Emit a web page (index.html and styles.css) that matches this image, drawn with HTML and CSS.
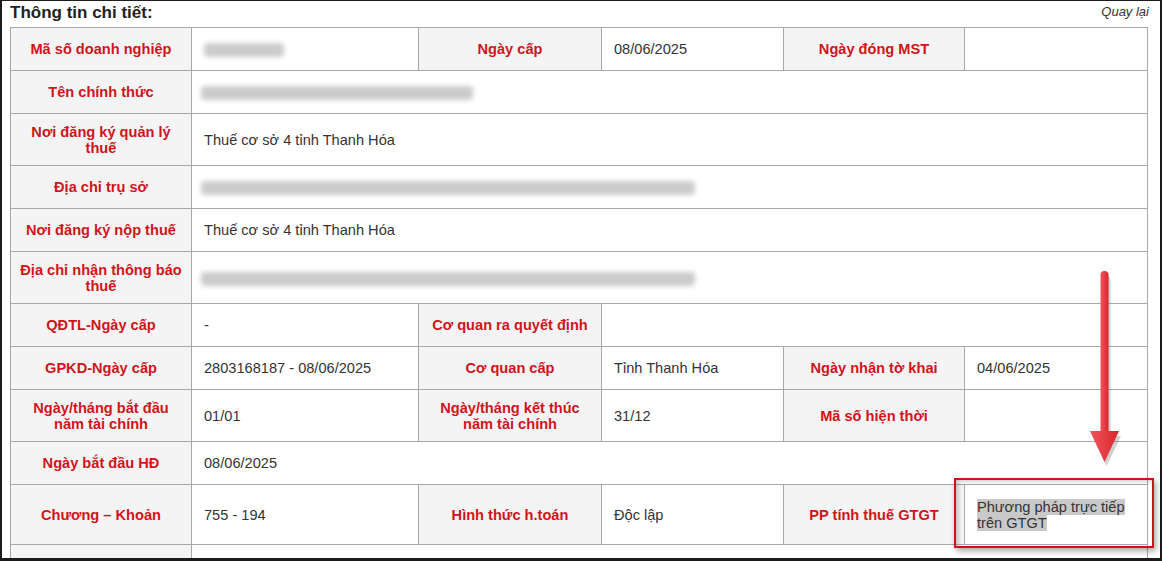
FILE: index.html
```html
<!DOCTYPE html>
<html lang="vi">
<head>
    <meta charset="UTF-8">
    <title>Thông tin chi tiết</title>
    <link rel="stylesheet" href="styles.css">
</head>
<body>
    <div class="trang">
        <div class="dau">
            <h2 class="tieu-de">Thông tin chi tiết:</h2>
            <a class="quay-lai" href="#">Quay lại</a>
        </div>
        <table class="bang">
            <colgroup>
                <col style="width:181px"><col style="width:227px"><col style="width:183px">
                <col style="width:182px"><col style="width:181px"><col style="width:183px">
            </colgroup>
            <tr class="h43">
                <th>Mã số doanh nghiệp</th>
                <td><span class="mo" style="width:80px"></span></td>
                <th>Ngày cấp</th>
                <td>08/06/2025</td>
                <th>Ngày đóng MST</th>
                <td></td>
            </tr>
            <tr class="h43">
                <th>Tên chính thức</th>
                <td colspan="5"><span class="mo mo-trai" style="width:272px"></span></td>
            </tr>
            <tr class="h52">
                <th>Nơi đăng ký quản lý thuế</th>
                <td colspan="5">Thuế cơ sở 4 tỉnh Thanh Hóa</td>
            </tr>
            <tr class="h43">
                <th>Địa chỉ trụ sở</th>
                <td colspan="5"><span class="mo mo-trai" style="width:494px"></span></td>
            </tr>
            <tr class="h43">
                <th>Nơi đăng ký nộp thuế</th>
                <td colspan="5">Thuế cơ sở 4 tỉnh Thanh Hóa</td>
            </tr>
            <tr class="h52">
                <th>Địa chỉ nhận thông báo thuế</th>
                <td colspan="5"><span class="mo mo-trai" style="width:494px"></span></td>
            </tr>
            <tr class="h43">
                <th>QĐTL-Ngày cấp</th>
                <td>-</td>
                <th>Cơ quan ra quyết định</th>
                <td colspan="3"></td>
            </tr>
            <tr class="h43">
                <th>GPKD-Ngày cấp</th>
                <td>2803168187 - 08/06/2025</td>
                <th>Cơ quan cấp</th>
                <td>Tỉnh Thanh Hóa</td>
                <th>Ngày nhận tờ khai</th>
                <td>04/06/2025</td>
            </tr>
            <tr class="h52">
                <th>Ngày/tháng bắt đầu năm tài chính</th>
                <td>01/01</td>
                <th>Ngày/tháng kết thúc năm tài chính</th>
                <td>31/12</td>
                <th>Mã số hiện thời</th>
                <td></td>
            </tr>
            <tr class="h43">
                <th>Ngày bắt đầu HĐ</th>
                <td colspan="5">08/06/2025</td>
            </tr>
            <tr class="h60">
                <th>Chương – Khoản</th>
                <td>755 - 194</td>
                <th>Hình thức h.toán</th>
                <td>Độc lập</td>
                <th>PP tính thuế GTGT</th>
                <td class="o-chon"><span class="boi-den">Phương pháp trực tiếp</span><br><span class="boi-den">trên GTGT</span></td>
            </tr>
            <tr class="h43">
                <th></th>
                <td colspan="5"></td>
            </tr>
        </table>

        <!-- chú thích: mũi tên và khung đỏ -->
        <svg class="mui-ten" width="40" height="200" viewBox="0 0 40 200">
            <defs>
                <linearGradient id="do" x1="0" x2="1">
                    <stop offset="0" stop-color="#f0555a"/>
                    <stop offset="1" stop-color="#d8262c"/>
                </linearGradient>
            </defs>
            <g opacity="0.35" transform="translate(2,3)">
                <rect x="15.5" y="3" width="8" height="165" rx="4" fill="#777"/>
                <polygon points="5,163 34,163 19.5,193" fill="#777"/>
            </g>
            <rect x="15.5" y="1" width="8" height="165" rx="4" fill="url(#do)"/>
            <polygon points="5,161 34,161 19.5,192" fill="url(#do)"/>
        </svg>
        <div class="khung-do"></div>
    </div>
</body>
</html>
```

FILE: styles.css
```css
body {
    margin: 0;
    background: #ffffff;
    font-family: "Liberation Sans", Arial, sans-serif;
}
.trang {
    position: relative;
    box-sizing: border-box;
    width: 1162px;
    height: 561px;
    border: 2px solid #1c1c1c;
    border-top-width: 1px;
    border-bottom-width: 3px;
    overflow: hidden;
    background: #ffffff;
}
.dau {
    display: flex;
    justify-content: space-between;
    align-items: flex-start;
    height: 26px;
    padding: 0 11px 0 8px;
}
.tieu-de {
    margin: 0;
    font-size: 17px;
    line-height: 23px;
    font-weight: bold;
    color: #222;
}
.quay-lai {
    margin-top: 3px;
    font-size: 13px;
    font-style: italic;
    color: #333;
    text-decoration: none;
}
.bang {
    margin-left: 8px;
    width: 1137px;
    table-layout: fixed;
    border-collapse: collapse;
    font-size: 14.6px;
    line-height: 16px;
}
.bang th,
.bang td {
    border: 1px solid #a8a8a8;
    padding: 0 12px;
    vertical-align: middle;
}
.bang th {
    background: #f4f4f4;
    color: #d0141c;
    font-weight: bold;
    text-align: center;
    padding: 0 9px;
}
.bang td {
    color: #333;
    text-align: left;
}
.h43 { height: 43px; }
.h52 { height: 52px; }
.h60 { height: 60px; }
.mo {
    display: inline-block;
    height: 14px;
    vertical-align: middle;
    background: #cbcbcb;
    border-radius: 4px;
    filter: blur(2.5px);
}
.mo-trai {
    margin-left: -3px;
}
.boi-den {
    background: #c9c9c9;
}
.mui-ten {
    position: absolute;
    left: 1083px;
    top: 269px;
}
.khung-do {
    position: absolute;
    left: 952px;
    top: 477px;
    width: 196px;
    height: 66px;
    border: 2px solid #c8141b;
    box-shadow: 2px 3px 6px rgba(0, 0, 0, 0.35), inset 4px 3px 5px -2px rgba(0, 0, 0, 0.25);
}
```
